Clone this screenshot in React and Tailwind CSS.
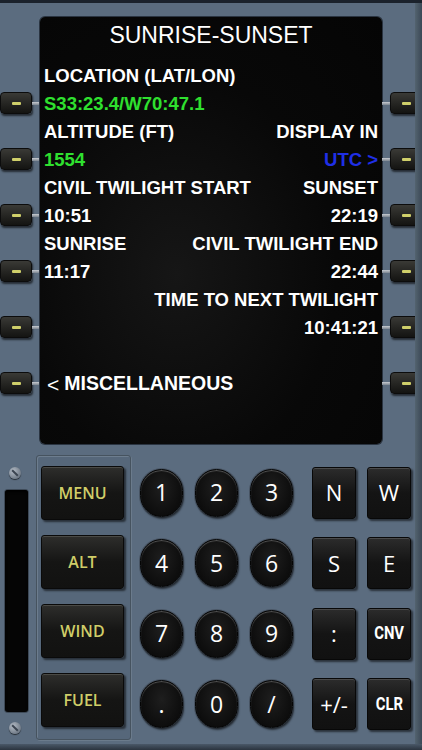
import React from 'react';

const helv = { fontFamily: '"Liberation Sans", Arial, sans-serif' };
const keyFont = { fontFamily: '"Open Sans", "Noto Sans", sans-serif' };
const condFont = { fontFamily: '"Roboto", "Liberation Sans", sans-serif' };

// line select key (side button with yellow dash)
function Lsk({ side }) {
	const btn = (
		<div className="w-[32px] h-[22px] rounded-[4px] bg-gradient-to-b from-[#3a3a36] to-[#141412] border border-[#0c0c0c] shadow-[1px_2px_2px_rgba(0,0,0,0.6)] flex items-center justify-center">
			<div className="w-[9px] h-[3px] rounded-[1px] bg-[#cfcf6a]" />
		</div>
	);
	const wire = <div className="w-[8px] h-[3px] bg-gradient-to-b from-[#c8ccd2] to-[#7c8590]" />;
	return (
		<div className="flex items-center h-[22px]">
			{side === 'left' ? (
				<>
					{btn}
					{wire}
				</>
			) : (
				<>
					{wire}
					{btn}
				</>
			)}
		</div>
	);
}

function LskColumn({ side }) {
	return (
		<div className="w-[40px] flex flex-col gap-[34px] pt-[75px]">
			{[0, 1, 2, 3, 4, 5].map((i) => (
				<Lsk key={i} side={side} />
			))}
		</div>
	);
}

const rows = [
	{ l: 'LOCATION (LAT/LON)' },
	{ l: 'S33:23.4/W70:47.1', lc: 'text-[#2fe02f]' },
	{ l: 'ALTITUDE (FT)', r: 'DISPLAY IN' },
	{ l: '1554', lc: 'text-[#2fe02f]', r: 'UTC >', rc: 'text-[#1f2fe6]' },
	{ l: 'CIVIL TWILIGHT START', r: 'SUNSET' },
	{ l: '10:51', r: '22:19' },
	{ l: 'SUNRISE', r: 'CIVIL TWILIGHT END' },
	{ l: '11:17', r: '22:44' },
	{ r: 'TIME TO NEXT TWILIGHT' },
	{ r: '10:41:21' },
	{},
	{ misc: true },
];

function Screen() {
	return (
		<div
			className="w-[342px] h-[427px] rounded-[5px] bg-[radial-gradient(ellipse_at_40%_60%,#161616_0%,#080808_55%,#050505_100%)] shadow-[0_0_0_1px_#2a3441] text-white px-[4px]"
			style={helv}
		>
			<div className="h-[36px] leading-[36px] text-center text-[23px]">SUNRISE-SUNSET</div>
			<div className="mt-[9px] flex flex-col">
				{rows.map((row, i) => (
					<div key={i} className="h-[28px] flex items-center justify-between text-[18.5px] font-bold leading-none">
						{row.misc ? (
							<span className="text-[19.5px] flex items-center">
								<span className="font-normal text-[21px] ml-[3px] mr-[5px]">&lt;</span>
								MISCELLANEOUS
							</span>
						) : (
							<span className={row.lc || ''}>{row.l || ''}</span>
						)}
						<span className={row.rc || ''}>{row.r || ''}</span>
					</div>
				))}
			</div>
		</div>
	);
}

function Screw() {
	return (
		<div className="w-[12px] h-[12px] rounded-full bg-[radial-gradient(circle_at_35%_35%,#b4bcc6,#56616e)] shadow-[0_1px_1px_rgba(0,0,0,0.6)] flex items-center justify-center">
			<div className="w-[8px] h-[2px] bg-[#3b4450] rotate-45" />
		</div>
	);
}

function FuncKey({ label }) {
	return (
		<div className="h-[69px] flex items-center">
			<div
				className="w-[83px] h-[54px] rounded-[3px] bg-gradient-to-b from-[#2e2e2c] via-[#151514] to-[#121211] border border-[#0a0a0a] shadow-[inset_0_1px_0_#4a4a46,2px_2px_2px_rgba(0,0,0,0.55)] flex items-center justify-center text-[#cfcd68] text-[16px] font-semibold"
				style={keyFont}
			>
				{label}
			</div>
		</div>
	);
}

function RoundKey({ label }) {
	return (
		<div className="h-[69px] flex items-center">
			<div
				className="w-[43px] h-[48px] rounded-full bg-[radial-gradient(ellipse_at_50%_40%,#1e1e1e,#0d0d0d_70%,#050505)] border border-[#050505] shadow-[inset_0_1px_1px_#555,1px_2px_2px_rgba(0,0,0,0.55),0_0_0_1px_#4a5665] flex items-center justify-center text-white text-[23px]"
				style={keyFont}
			>
				{label}
			</div>
		</div>
	);
}

function SquareKey({ label, cond }) {
	return (
		<div className="h-[69px] flex items-center">
			<div
				className={`w-[44px] h-[52px] rounded-[3px] bg-gradient-to-b from-[#2c2c2c] via-[#141414] to-[#111] border border-[#080808] shadow-[inset_0_1px_0_#4a4a4a,2px_2px_2px_rgba(0,0,0,0.55)] flex items-center justify-center text-white ${
					cond ? 'text-[19px] font-bold' : 'text-[22px]'
				}`}
				style={cond ? condFont : keyFont}
			>
				{cond ? <span className="inline-block scale-x-[0.78]">{label}</span> : label}
			</div>
		</div>
	);
}

export default function App() {
	return (
		<div className="w-[422px] h-[750px] overflow-hidden bg-[#5b6c7f] border-t-[3px] border-[#1b222c] relative">
			<div className="absolute right-0 top-0 bottom-0 w-[7px] bg-gradient-to-r from-[#53636f] to-[#3b4856]" />
			<div className="absolute left-0 right-0 bottom-0 h-[6px] bg-gradient-to-b from-[#4a5868] to-[#2b343f]" />
			<div className="flex pt-[14px]">
				<LskColumn side="left" />
				<Screen />
				<LskColumn side="right" />
			</div>

			<div className="flex">
				{/* left slot + screws */}
				<div className="w-[36px] flex flex-col pt-[23px]">
					<div className="ml-[9px]">
						<Screw />
					</div>
					<div className="ml-[5px] mt-[11px] w-[23px] h-[222px] rounded-[3px] bg-[#050505] shadow-[inset_0_2px_3px_#000,0_0_0_1px_#3e4a58]" />
					<div className="ml-[9px] mt-[10px]">
						<Screw />
					</div>
				</div>

				{/* function key recess */}
				<div className="w-[95px] h-[285px] mt-[11px] rounded-[3px] border border-[#46535f] shadow-[inset_1px_1px_0_#6d7d8e,1px_1px_0_#6b7b8c] bg-[#56677a] pt-[2px] pl-[4px] flex flex-col">
					{['MENU', 'ALT', 'WIND', 'FUEL'].map((k) => (
						<FuncKey key={k} label={k} />
					))}
				</div>

				{/* number keys */}
				<div className="ml-[9px] mt-[14px] grid grid-cols-3 gap-x-[12px]">
					{['1', '2', '3', '4', '5', '6', '7', '8', '9', '.', '0', '/'].map((k) => (
						<RoundKey key={k} label={k} />
					))}
				</div>

				{/* letter keys */}
				<div className="ml-[19px] mt-[14px] grid grid-cols-2 gap-x-[11px]">
					<SquareKey label="N" />
					<SquareKey label="W" />
					<SquareKey label="S" />
					<SquareKey label="E" />
					<SquareKey label=":" />
					<SquareKey label="CNV" cond />
					<SquareKey label="+/-" />
					<SquareKey label="CLR" cond />
				</div>
			</div>
		</div>
	);
}
